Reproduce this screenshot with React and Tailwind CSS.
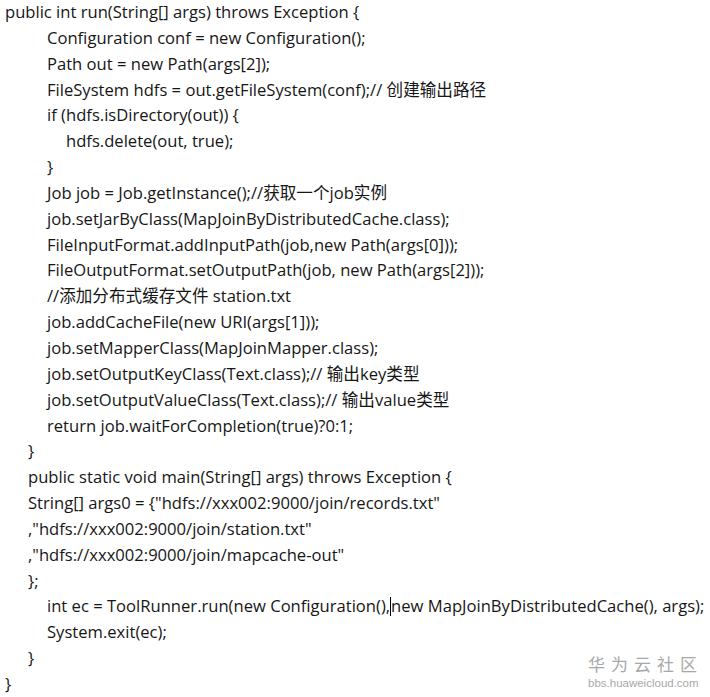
import React from "react";

const lines = [
  [0, "public int run(String[] args) throws Exception {"],
  [2, "Configuration conf = new Configuration();"],
  [2, "Path out = new Path(args[2]);"],
  [2, "FileSystem hdfs = out.getFileSystem(conf);// 创建输出路径"],
  [2, "if (hdfs.isDirectory(out)) {"],
  [3, "hdfs.delete(out, true);"],
  [2, "}"],
  [2, "Job job = Job.getInstance();//获取一个job实例"],
  [2, "job.setJarByClass(MapJoinByDistributedCache.class);"],
  [2, "FileInputFormat.addInputPath(job,new Path(args[0]));"],
  [2, "FileOutputFormat.setOutputPath(job, new Path(args[2]));"],
  [2, "//添加分布式缓存文件 station.txt"],
  [2, "job.addCacheFile(new URI(args[1]));"],
  [2, "job.setMapperClass(MapJoinMapper.class);"],
  [2, "job.setOutputKeyClass(Text.class);// 输出key类型"],
  [2, "job.setOutputValueClass(Text.class);// 输出value类型"],
  [2, "return job.waitForCompletion(true)?0:1;"],
  [1, "}"],
  [1, "public static void main(String[] args) throws Exception {"],
  [1, 'String[] args0 = {"hdfs://xxx002:9000/join/records.txt"'],
  [1, ',"hdfs://xxx002:9000/join/station.txt"'],
  [1, ',"hdfs://xxx002:9000/join/mapcache-out"'],
  [1, "};"],
  [2, "CURSOR"],
  [2, "System.exit(ec);"],
  [1, "}"],
  [0, "}"],
];

const indent = ["pl-[5px]", "pl-[28px]", "pl-[47px]", "pl-[66px]"];

export default function App() {
  return (
    <div className="relative w-[710px] h-[697px] overflow-hidden bg-white text-[#161616]">
      <div
        className="-mt-[1px] text-[16.6px] leading-[25.85px] whitespace-pre"
        style={{ fontFamily: '"Open Sans", "Noto Sans CJK SC", sans-serif' }}
      >
        {lines.map(([lvl, text], i) => (
          <div key={i} className={indent[lvl]}>
            {text === "CURSOR" ? (
              <>
                int ec = ToolRunner.run(new Configuration(),
                <span className="inline-block w-0 h-[19px] align-[-4px] border-l border-black" />
                new MapJoinByDistributedCache(), args);
              </>
            ) : (
              text
            )}
          </div>
        ))}
      </div>
      <div
        className="absolute left-[588px] top-[654px] flex flex-col items-start text-[#a8a8a8]"
        style={{ fontFamily: '"Noto Sans CJK SC", "Liberation Sans", sans-serif' }}
      >
        <div className="text-[17px] leading-[20px] tracking-[6px]">华为云社区</div>
        <div className="text-[11.5px] leading-[14px] mt-[2px]" style={{ fontFamily: '"Liberation Sans", sans-serif' }}>
          bbs.huaweicloud.com
        </div>
      </div>
    </div>
  );
}
